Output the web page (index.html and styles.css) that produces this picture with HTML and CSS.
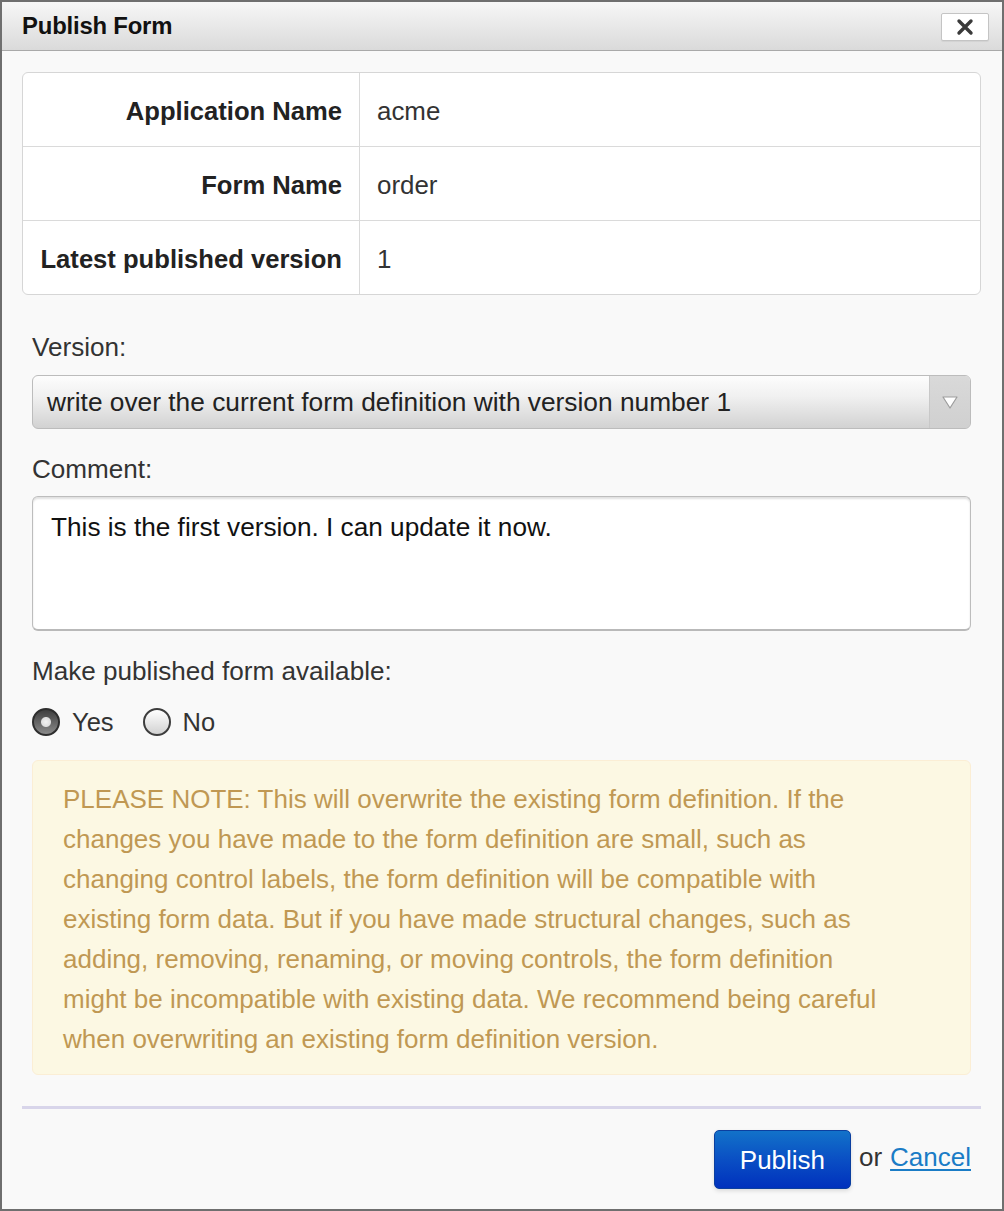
FILE: index.html
```html
<!DOCTYPE html>
<html lang="en">
<head>
<meta charset="utf-8">
<title>Publish Form</title>
<link rel="stylesheet" href="styles.css">
</head>
<body>
<div class="dialog">
  <div class="dialog-header">
    <h1 class="dialog-title">Publish Form</h1>
    <button class="close-btn" aria-label="Close">
      <svg width="18" height="18" viewBox="0 0 18 18"><path d="M3 3 L15 15 M15 3 L3 15" stroke="#3a3a3a" stroke-width="3.4" stroke-linecap="round" fill="none"/></svg>
    </button>
  </div>
  <div class="dialog-body">
    <div class="info">
      <div class="info-label">Application Name</div>
      <div class="info-value">acme</div>
      <div class="info-label">Form Name</div>
      <div class="info-value">order</div>
      <div class="info-label last">Latest published version</div>
      <div class="info-value last">1</div>
    </div>

    <div class="form">
      <div class="field-label first">Version:</div>
      <div class="select">
        <div class="select-value">write over the current form definition with version number 1</div>
        <div class="select-arrow">
          <svg width="18" height="15" viewBox="0 0 18 15"><polygon points="2,2 16,2 9,13" fill="#ffffff" stroke="#9d9d9d" stroke-width="1.2" stroke-linejoin="round"/></svg>
        </div>
      </div>

      <div class="field-label">Comment:</div>
      <div class="textarea">This is the first version. I can update it now.</div>

      <div class="field-label">Make published form available:</div>
      <div class="radios">
        <label class="radio-item"><span class="radio checked"></span><span>Yes</span></label>
        <label class="radio-item"><span class="radio"></span><span>No</span></label>
      </div>

      <div class="alert">PLEASE NOTE: This will overwrite the existing form definition. If the<br>changes you have made to the form definition are small, such as<br>changing control labels, the form definition will be compatible with<br>existing form data. But if you have made structural changes, such as<br>adding, removing, renaming, or moving controls, the form definition<br>might be incompatible with existing data. We recommend being careful<br>when overwriting an existing form definition version.</div>
    </div>

    <div class="divider"></div>

    <div class="footer">
      <button class="publish-btn">Publish</button>
      <span class="or">or</span>
      <a class="cancel" href="#">Cancel</a>
    </div>
  </div>
</div>
</body>
</html>
```

FILE: styles.css
```css
* { box-sizing: border-box; }

html, body {
  margin: 0;
  padding: 0;
}

body {
  font-family: "Liberation Sans", Arial, Helvetica, sans-serif;
  color: #333;
  background: #f9f9f9;
}

.dialog {
  width: 1004px;
  height: 1211px;
  border: 2px solid #6f6f6f;
  background: #f9f9f9;
}

.dialog-header {
  height: 49px;
  display: flex;
  align-items: center;
  justify-content: space-between;
  padding: 0 13px 0 20px;
  background: linear-gradient(#f7f7f7, #dadada);
  border-bottom: 1px solid #a9a9a9;
}

.dialog-title {
  margin: 0;
  font-size: 23.9px;
  font-weight: bold;
  color: #111;
  letter-spacing: -0.2px;
}

.close-btn {
  width: 48px;
  height: 28px;
  margin-top: 1px;
  background: #fff;
  border: 1px solid #c4c4c4;
  border-radius: 2px;
  padding: 0;
  display: flex;
  align-items: center;
  justify-content: center;
  box-shadow: 0 1px 1px rgba(0,0,0,0.06);
}

.dialog-body {
  padding: 21px 21px 0 20px;
}

.info {
  display: grid;
  grid-template-columns: 337px 1fr;
  border: 1px solid #d6d6d6;
  border-radius: 6px;
  background: #fff;
}

.info-label,
.info-value {
  height: 74px;
  display: flex;
  align-items: center;
  padding-top: 3px;
  font-size: 25.6px;
  border-bottom: 1px solid #dadada;
}

.info-label {
  justify-content: flex-end;
  padding-right: 17px;
  font-weight: bold;
  color: #222;
  border-right: 1px solid #dadada;
}

.info-value {
  padding-left: 17px;
  color: #333;
  font-size: 25.9px;
}

.info-label.last,
.info-value.last {
  border-bottom: none;
  height: 73px;
}

.form {
  padding: 0 10px;
}

.field-label {
  font-size: 26.1px;
  line-height: 32px;
  color: #333;
  margin-top: 24px;
}

.field-label.first {
  margin-top: 36px;
}

.select {
  margin-top: 12px;
  height: 54px;
  display: flex;
  border: 1px solid #bcbcbc;
  border-radius: 6px;
  overflow: hidden;
  background: linear-gradient(#fdfdfd, #f0f0f0 40%, #d2d2d2);
}

.select-value {
  flex: 1;
  display: flex;
  align-items: center;
  padding-left: 14px;
  font-size: 26.3px;
  color: #222;
}

.select-arrow {
  width: 41px;
  display: flex;
  align-items: center;
  justify-content: center;
  background: linear-gradient(#d9d9d9, #d0d0d0);
  border-left: 1px solid #c8c8c8;
}

.textarea {
  margin-top: 11px;
  height: 135px;
  background: #fff;
  border: 1px solid #bdbdbd;
  border-bottom: 2px solid #b9b9b9;
  border-radius: 6px;
  box-shadow: inset 0 2px 2px rgba(0,0,0,0.12);
  padding: 14px 0 0 18px;
  font-size: 26.2px;
  line-height: 32px;
  color: #111;
}

.radios {
  margin-top: 21px;
  height: 28px;
  display: flex;
  align-items: center;
  gap: 29px;
  font-size: 25.5px;
  color: #333;
}

.radio-item {
  display: flex;
  align-items: center;
  gap: 12px;
}

.radio {
  width: 28px;
  height: 28px;
  border-radius: 50%;
  border: 2px solid #3d3d3d;
  background: linear-gradient(#ffffff, #d2d2d2);
}

.radio.checked {
  border-color: #2e2e2e;
  background:
    radial-gradient(circle at 50% 50%, #f2f2f2 0, #dedede 4.5px, rgba(0,0,0,0) 5.5px),
    linear-gradient(#3f3f3f, #8a8a8a);
}

.alert {
  margin-top: 24px;
  height: 315px;
  background: #fcf8e3;
  border: 1px solid #fbeed5;
  border-radius: 6px;
  padding: 18px 20px 0 30px;
  font-size: 26px;
  line-height: 40px;
  color: #c09853;
  white-space: nowrap;
}

.divider {
  margin-top: 31px;
  height: 3px;
  background: #d8d5ea;
}

.footer {
  margin-top: 21px;
  padding-right: 10px;
  display: flex;
  justify-content: flex-end;
  align-items: center;
}

.publish-btn {
  width: 137px;
  height: 59px;
  border: 1px solid #0b3f9f;
  border-radius: 5px;
  background: linear-gradient(#1272c9, #0a4fc4 50%, #0031bd);
  color: #fff;
  font-family: "Liberation Sans", Arial, sans-serif;
  font-size: 26px;
  padding: 2px 0 0;
  box-shadow: 0 2px 4px rgba(0,0,0,0.12);
}

.or {
  margin-left: 8px;
  margin-bottom: 4px;
  font-size: 26px;
  color: #333;
}

.cancel {
  margin-left: 8px;
  margin-bottom: 4px;
  font-size: 26px;
  color: #1a7cc6;
  text-decoration: underline;
  text-underline-offset: 3px;
}
```
